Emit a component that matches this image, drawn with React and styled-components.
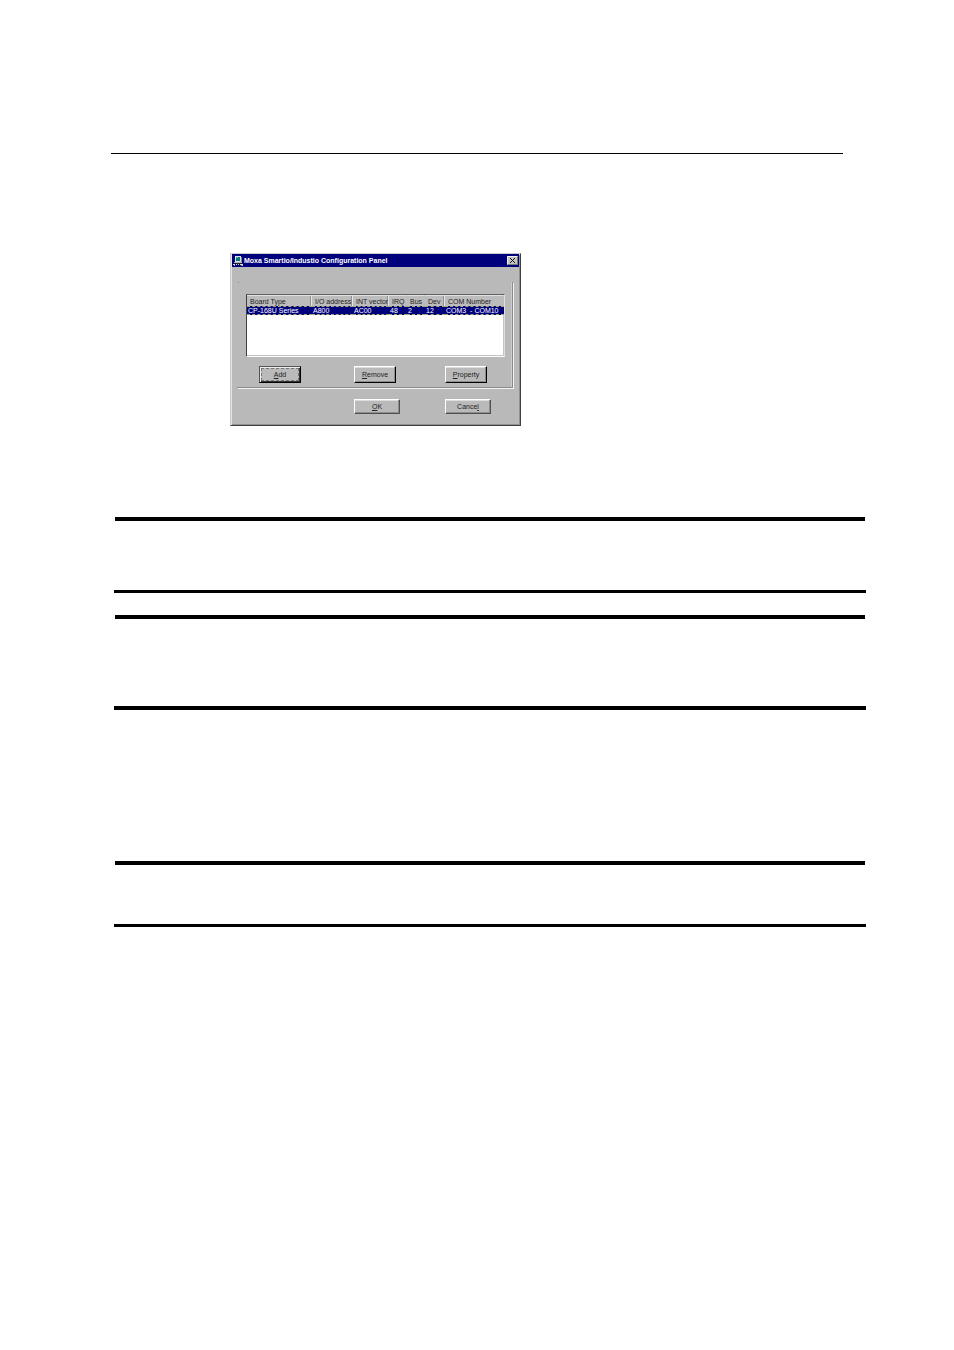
import React from "react";
import styled, { createGlobalStyle } from "styled-components";

const GlobalStyle = createGlobalStyle`
  *, *::before, *::after { box-sizing: border-box; }
  body { margin: 0; background: #fff; }
`;

const Page = styled.main`
  padding: 153px 88px 424px 114px;
  font-family: "Liberation Sans", Arial, sans-serif;
  font-size: 7px;
  line-height: 9px;
  color: #222;
`;

const HeaderRule = styled.hr`
  height: 1px;
  margin: 0 23px 99px -3px;
  border: 0;
  background: #000;
`;

const Note = styled.section`
  height: ${(p) => p.$height}px;
  margin-top: ${(p) => p.$gap}px;
  display: flex;
  flex-direction: column;
  justify-content: space-between;
`;

const NoteRule = styled.hr`
  align-self: stretch;
  height: ${(p) => p.$weight}px;
  margin: 0 ${(p) => (p.$inset ? 1 : 0)}px;
  border: 0;
  background: #000;
`;

const Dialog = styled.section`
  width: 291px;
  height: 173px;
  margin-left: 116px;
  padding: 0 1px;
  background: #b9b9b9;
  border: 1px solid;
  border-color: #c8c8c8 #404040 #404040 #c8c8c8;
  box-shadow: inset 1px 1px #e4e4e4, inset -1px -1px #909090;
`;

const TitleBar = styled.header`
  display: flex;
  align-items: center;
  gap: 1px;
  height: 13px;
  padding: 0 1px;
  background: #00007c;
  color: #fff;
`;

const Title = styled.h1`
  flex: 1;
  margin: 0;
  font-size: 7px;
  line-height: 9px;
  font-weight: 700;
  white-space: nowrap;
`;

const CloseButton = styled.button`
  display: flex;
  align-items: center;
  justify-content: center;
  width: 11px;
  height: 9px;
  padding: 0;
  background: #c4c4c4;
  border: 1px solid;
  border-color: #eee #777 #777 #eee;
`;

const Group = styled.div`
  width: 276px;
  height: 106px;
  margin: 15px 0 0 5px;
  padding: 12px 7px 0 9px;
  border: solid #8a8a8a;
  border-width: 0 1px 1px 0;
  box-shadow: 1px 1px #f4f4f4, inset -1px 0 #cdcdcd;
  background: linear-gradient(#888, #888) 1px 0 / 1px 1px no-repeat;
`;

const ListBox = styled.div`
  height: 63px;
  background: #fff;
  border: 1px solid;
  border-color: #606060 #e0e0e0 #fff #404040;
  box-shadow: inset -1px -1px #c4c4c4;
`;

const Table = styled.table`
  width: 100%;
  table-layout: fixed;
  border-collapse: separate;
  border-spacing: 0;
`;

const HeadCell = styled.th`
  height: 11px;
  padding: 2px 0 0 3px;
  background: #bcbcbc;
  border-top: 1px solid #e2e2e2;
  border-right: 1px solid ${(p) => (p.$open ? "#bcbcbc" : "#e6e6e6")};
  box-shadow: ${(p) => (p.$open ? "none" : "inset -1px 0 #909090")};
  font-weight: 400;
  line-height: 8px;
  text-align: left;
  white-space: nowrap;
`;

const SelectedRow = styled.tr`
  background: #00007c;
  color: #fff;
`;

const Cell = styled.td`
  height: 9px;
  padding: 0 0 0 1px;
  border: dashed #a8a874;
  border-width: 1px 0;
  line-height: 7px;
  text-align: left;
  white-space: pre;
`;

const Buttons = styled.div`
  display: grid;
  grid-template-columns: 95px 91px 46px;
  padding-left: ${(p) => p.$indent}px;
  margin-top: ${(p) => p.$gap}px;
`;

const Button = styled.button`
  grid-column: ${(p) => p.$column};
  width: ${(p) => (p.$wide ? 46 : 42)}px;
  height: ${(p) => (p.$wide ? 15 : 17)}px;
  padding: 0;
  background: #bababa;
  border: 1px solid;
  border-color: #fff ${(p) => (p.$wide ? "#505050 #505050" : "#000 #000")} #fff;
  box-shadow: inset -1px -1px #8c8c8c, inset 0 1px #ddd;
  font: inherit;
  line-height: 8px;
  color: inherit;
`;

const DefaultButton = styled(Button)`
  border-color: #555 #000 #000 #555;
  box-shadow: inset 1px 1px #eee, inset -1px -1px #333;
  outline: 1px dashed #777;
  outline-offset: -3px;
`;

const columns = [
  { label: "Board Type", width: 65, value: "CP-168U Series" },
  { label: "I/O address", width: 41, value: "A800" },
  { label: "INT vector", width: 36, value: "AC00" },
  { label: "IRQ", width: 18, value: "48", open: true },
  { label: "Bus", width: 18, value: "2", open: true },
  { label: "Dev", width: 20, value: "12" },
  { label: "COM Number", width: 59, value: "COM3  - COM10", open: true },
];

function ModemIcon() {
  return (
    <svg width="10" height="10" viewBox="0 0 10 10" shapeRendering="crispEdges" aria-hidden="true">
      <path d="M2 0h6v6H2z" fill="#dedede" />
      <path d="M3 1h4v4H3z" fill="#087878" />
      <path d="M3 1h2v1H3z" fill="#35b5b5" />
      <path d="M8 1h1v5H8z" fill="#808080" />
      <path d="M1 6h8v1H1z" fill="#b8b8b8" />
      <path d="M2 7h7v1H2z" fill="#202020" />
      <path d="M0 8h2v1H0zM3 8h1v1H3zM5 8h1v1H5zM7 8h3v1H7z" fill="#e0e0d0" />
      <path d="M1 9h1v1H1zM8 9h2v1H8z" fill="#a8a8a8" />
    </svg>
  );
}

export default function App() {
  return (
    <>
      <GlobalStyle />
      <Page>
        <HeaderRule />
        <Dialog aria-labelledby="panel-title">
          <TitleBar>
            <ModemIcon />
            <Title id="panel-title">Moxa Smartio/Industio Configuration Panel</Title>
            <CloseButton type="button" aria-label="Close">
              <svg width="7" height="7" viewBox="0 0 7 7" aria-hidden="true">
                <path d="M1 1l5 5M6 1L1 6" stroke="#111" strokeWidth="1" />
              </svg>
            </CloseButton>
          </TitleBar>
          <Group>
            <ListBox>
              <Table>
                <colgroup>
                  {columns.map((c) => (
                    <col key={c.label} width={c.width} />
                  ))}
                </colgroup>
                <thead>
                  <tr>
                    {columns.map((c) => (
                      <HeadCell key={c.label} scope="col" $open={c.open}>{c.label}</HeadCell>
                    ))}
                  </tr>
                </thead>
                <tbody>
                  <SelectedRow>
                    {columns.map((c) => (
                      <Cell key={c.label}>{c.value}</Cell>
                    ))}
                  </SelectedRow>
                </tbody>
              </Table>
            </ListBox>
            <Buttons $indent={13} $gap={9}>
              <DefaultButton type="button"><u>A</u>dd</DefaultButton>
              <Button type="button"><u>R</u>emove</Button>
              <Button type="button"><u>P</u>roperty</Button>
            </Buttons>
          </Group>
          <Buttons $indent={27} $gap={11}>
            <Button type="button" $wide $column={2}><u>O</u>K</Button>
            <Button type="button" $wide $column={3}>Cance<u>l</u></Button>
          </Buttons>
        </Dialog>
        <Note $height={76} $gap={91}>
          <NoteRule $weight={4} $inset />
          <NoteRule $weight={3} />
        </Note>
        <Note $height={95} $gap={22}>
          <NoteRule $weight={4} $inset />
          <NoteRule $weight={4} />
        </Note>
        <Note $height={66} $gap={151}>
          <NoteRule $weight={4} $inset />
          <NoteRule $weight={3} />
        </Note>
      </Page>
    </>
  );
}
